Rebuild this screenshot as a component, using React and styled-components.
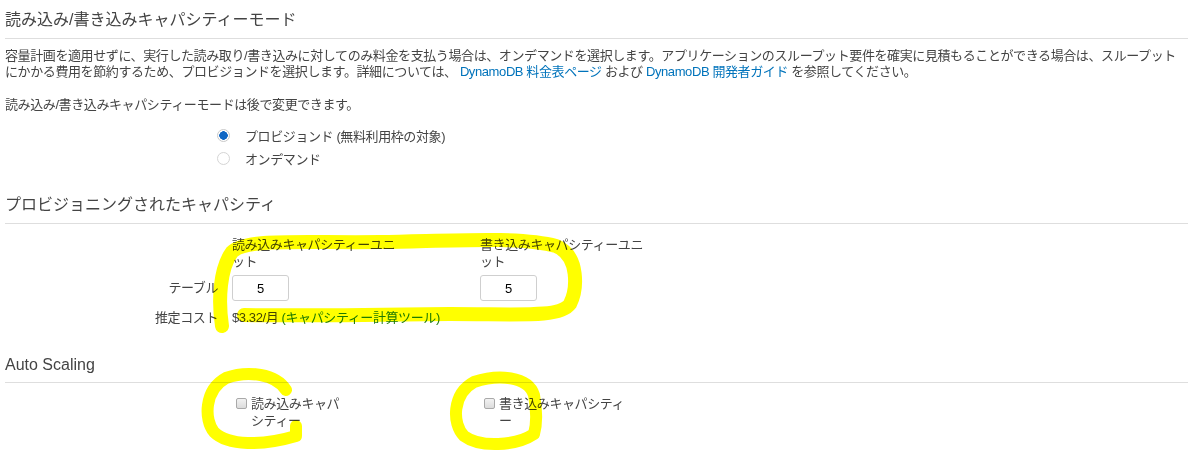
import React from 'react'
import styled, { createGlobalStyle } from 'styled-components'

const GlobalStyle = createGlobalStyle`
    body {
        margin: 0;
        background: #fff;
        color: #444;
        font-family: "Liberation Sans", "Noto Sans CJK JP", sans-serif;
    }
`

const Page = styled.div`
    position: relative;
    width: 1197px;
    height: 452px;
    padding: 0 9px 0 5px;
    box-sizing: border-box;
    overflow: hidden;
    font-size: 13px;
    letter-spacing: -0.4px;
`

const SectionHeader = styled.h2`
    margin: ${props => props.top || 9}px 0 0;
    padding-bottom: ${props => props.pad || 8}px;
    border-bottom: 1px solid #dedede;
    font-size: 16px;
    font-weight: normal;
    line-height: 20px;
    letter-spacing: 0;
    color: #444;
`

const Paragraph = styled.p`
    margin: ${props => props.top || 0}px 0 0;
    line-height: 16px;
`

const DocLink = styled.a`
    color: #0073bb;
    text-decoration: none;
    cursor: pointer;
`

const RadioGroup = styled.div`
    margin-top: 11px;
    padding-left: 212px;
`

const RadioRow = styled.label`
    display: flex;
    align-items: center;
    gap: 15px;
    height: 23px;
`

const Radio = styled.span`
    width: 13px;
    height: 13px;
    box-sizing: border-box;
    border-radius: 50%;
    border: 1px solid ${props => (props.checked ? '#c9c9c9' : '#d5d5d5')};
    background: ${props => (props.checked ? 'radial-gradient(circle, #0f66c4 0 4px, #fff 4.5px)' : '#fff')};
`

const FormGrid = styled.div`
    display: grid;
    grid-template-columns: 227px 248px 1fr;
    align-items: center;
    row-gap: 5px;
    margin-top: ${props => props.top || 12}px;
`

const ColHeader = styled.div`
    width: ${props => props.width}px;
    line-height: 17px;
    align-self: start;
`

const RowLabel = styled.div`
    padding: ${props => (props.spaced ? '3px' : '0')} 14px 0 0;
    text-align: right;
    line-height: 18px;
`

const UnitInput = styled.input`
    display: block;
    width: 57px;
    height: 26px;
    box-sizing: border-box;
    margin: 0;
    border: 1px solid #cfcfcf;
    border-radius: 3px;
    font-family: "Liberation Sans", sans-serif;
    font-size: 13px;
    color: #000;
    text-align: center;
    outline: none;
`

const Cost = styled.div`
    grid-column: 2 / 4;
    padding-top: 3px;
    line-height: 18px;
`

const CostLink = styled.a`
    color: #1d7a12;
    text-decoration: none;
`

const CheckOption = styled.label`
    display: flex;
    align-items: flex-start;
    gap: 4px;
    padding-left: 4px;
    line-height: 17px;
`

const CheckBox = styled.span`
    flex: none;
    width: 11px;
    height: 11px;
    margin-top: 3px;
    box-sizing: border-box;
    border: 1px solid #a9a9a9;
    border-radius: 2px;
    background: linear-gradient(#f2f2f2, #dcdcdc);
`

const CheckText = styled.span`
    width: ${props => props.width}px;
`

const Highlighter = styled.svg`
    position: absolute;
    top: 0;
    left: 0;
    pointer-events: none;
    mix-blend-mode: multiply;
`

const Marks = () => (
    <Highlighter width="1197" height="452" viewBox="0 0 1197 452">
        <g fill="none" stroke="#ffff00" strokeLinecap="round" strokeLinejoin="round">
            <path strokeWidth="14" d="M222 326 C218 300 220 268 232 252 C246 238 300 243 380 242 C450 241 520 236 556 246 C580 256 577 290 570 304 C560 318 520 314 450 314 C380 315 300 316 244 315" />
            <path strokeWidth="12" d="M286 390 C276 374 248 370 226 378 C204 390 204 420 214 432 C228 446 262 446 296 436 L296 426" />
            <path strokeWidth="12" d="M534 395 C528 376 498 374 474 382 C452 394 452 424 464 436 C480 448 516 446 534 434 C538 420 536 406 534 395" />
        </g>
    </Highlighter>
)

export default function App() {
    return (
        <Page>
            <GlobalStyle />
            <SectionHeader top={10} pad={8}>読み込み/書き込みキャパシティーモード</SectionHeader>
            <Paragraph top={9}>
                容量計画を適用せずに、実行した読み取り/書き込みに対してのみ料金を支払う場合は、オンデマンドを選択します。アプリケーションのスループット要件を確実に見積もることができる場合は、スループットにかかる費用を節約するため、プロビジョンドを選択します。詳細については、 <DocLink>DynamoDB 料金表ページ</DocLink> および <DocLink>DynamoDB 開発者ガイド</DocLink> を参照してください。
            </Paragraph>
            <Paragraph top={17}>読み込み/書き込みキャパシティーモードは後で変更できます。</Paragraph>
            <RadioGroup>
                <RadioRow>
                    <Radio checked />
                    <span>プロビジョンド (無料利用枠の対象)</span>
                </RadioRow>
                <RadioRow>
                    <Radio />
                    <span>オンデマンド</span>
                </RadioRow>
            </RadioGroup>

            <SectionHeader top={25}>プロビジョニングされたキャパシティ</SectionHeader>
            <FormGrid>
                <span />
                <ColHeader width={168}>読み込みキャパシティーユニット</ColHeader>
                <ColHeader width={168}>書き込みキャパシティーユニット</ColHeader>
                <RowLabel>テーブル</RowLabel>
                <div><UnitInput defaultValue="5" /></div>
                <div><UnitInput defaultValue="5" /></div>
                <RowLabel spaced>推定コスト</RowLabel>
                <Cost>$3.32/月 <CostLink>(キャパシティー計算ツール)</CostLink></Cost>
            </FormGrid>

            <SectionHeader top={28} pad={7}>Auto Scaling</SectionHeader>
            <FormGrid top={12}>
                <span />
                <CheckOption>
                    <CheckBox />
                    <CheckText width={94}>読み込みキャパシティー</CheckText>
                </CheckOption>
                <CheckOption>
                    <CheckBox />
                    <CheckText width={131}>書き込みキャパシティー</CheckText>
                </CheckOption>
            </FormGrid>
            <Marks />
        </Page>
    )
}
